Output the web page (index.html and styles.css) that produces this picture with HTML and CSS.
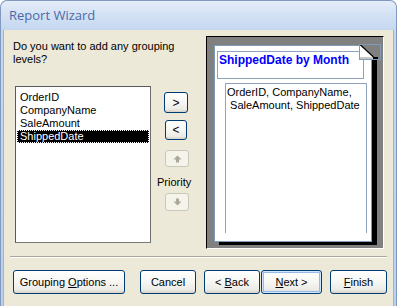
FILE: index.html
```html
<!DOCTYPE html>
<html>
<head>
<meta charset="utf-8">
<link rel="stylesheet" href="styles.css">
</head>
<body>
<div class="window">
  <div class="titlebar"><span class="title">Report Wizard</span></div>
  <div class="client">
    <div class="main">
      <div class="left">
        <p class="question">Do you want to add any grouping levels?</p>
        <div class="picker">
          <ul class="listbox">
            <li>OrderID</li>
            <li>CompanyName</li>
            <li>SaleAmount</li>
            <li class="selected"><span>ShippedDate</span></li>
          </ul>
          <div class="movebtns">
            <button class="btn move-add">&gt;</button>
            <button class="btn move-remove">&lt;</button>
            <button class="btn arrow up" disabled>
              <svg width="9" height="8" viewBox="0 0 9 8"><path d="M4.5 0.5 L8.5 4.5 L6 4.5 L6 7.5 L3 7.5 L3 4.5 L0.5 4.5 Z" fill="#aca899"/></svg>
            </button>
            <span class="priority">Priority</span>
            <button class="btn arrow down" disabled>
              <svg width="9" height="8" viewBox="0 0 9 8"><path d="M4.5 7.5 L8.5 3.5 L6 3.5 L6 0.5 L3 0.5 L3 3.5 L0.5 3.5 Z" fill="#aca899"/></svg>
            </button>
          </div>
        </div>
      </div>
      <div class="preview">
        <div class="page">
          <div class="group-head">ShippedDate by Month</div>
          <div class="detail">OrderID, CompanyName,<br>&nbsp;SaleAmount, ShippedDate</div>
          <svg class="dogear" width="22" height="16" viewBox="0 0 22 16">
            <rect x="0" y="0" width="22" height="16" fill="#808080"/>
            <polygon points="1,1 14,13 1,13" fill="#ffffff"/>
            <rect x="1" y="13" width="13" height="2" fill="#c8c8c8"/>
            <line x1="1" y1="0.5" x2="14.5" y2="13" stroke="#000" stroke-width="1.2"/>
            <rect x="14" y="13" width="5" height="3" fill="#000"/>
            <rect x="0.5" y="0.5" width="21" height="15" fill="none" stroke="#7f9db9"/>
          </svg>
        </div>
      </div>
    </div>
    <div class="separator"></div>
    <div class="footer">
      <button class="btn foot grouping"><span>Grouping <u>O</u>ptions ...</span></button>
      <button class="btn foot cancel"><span>Cancel</span></button>
      <button class="btn foot back"><span>&lt; <u>B</u>ack</span></button>
      <button class="btn foot next default"><span><u>N</u>ext &gt;</span></button>
      <button class="btn foot finish"><span><u>F</u>inish</span></button>
    </div>
  </div>
</div>
</body>
</html>
```
FILE: styles.css
```css
* { box-sizing: border-box; }
html, body {
  margin: 0;
  padding: 0;
  width: 397px;
  height: 306px;
  overflow: hidden;
  background: #ffffff;
}
body {
  font-family: "Liberation Sans", Arial, sans-serif;
  font-size: 11px;
  color: #000;
}
.window {
  width: 397px;
  height: 306px;
  border: 1px solid #8198c0;
  border-bottom: none;
  border-radius: 7px 7px 0 0;
  background: linear-gradient(to bottom, #e4edf9 0px, #d3e1f4 14px, #c5d7f0 29px, #bcd0ec 100%);
  display: flex;
  flex-direction: column;
  padding: 0 2px 0 2px;
  overflow: hidden;
}
.titlebar {
  height: 29px;
  flex: none;
  padding-left: 6px;
  line-height: 29px;
}
.title {
  font-family: "Open Sans", "Noto Sans", sans-serif;
  font-size: 13px;
  color: #4d6aa8;
}
.client {
  flex: 1;
  background: #ece9d8;
  border: 1px solid #9fb3d4;
  border-top: none;
  border-bottom: none;
  display: flex;
  flex-direction: column;
}
.main {
  display: flex;
  padding-left: 9px;
  height: 219px;
}
.left {
  width: 193px;
  flex: none;
}
.question {
  margin: 10px 0 0 0;
  width: 182px;
  line-height: 13px;
}
.picker {
  display: flex;
  margin: 20px 0 0 2px;
}
.listbox {
  list-style: none;
  margin: 0;
  padding: 4px 1px 0 1px;
  width: 136px;
  height: 157px;
  background: #fff;
  border: 1px solid #5a5a5a;
  border-right-color: #6e6e6e;
  border-bottom-color: #7a7a7a;
}
.listbox li {
  height: 13px;
  line-height: 13px;
  padding-left: 3px;
  white-space: nowrap;
}
.listbox li.selected {
  background: #000;
  color: #fff;
  outline: 1px dotted #fff;
  outline-offset: -1px;
}
.movebtns {
  display: flex;
  flex-direction: column;
  align-items: flex-start;
  padding-left: 5px;
}
.btn {
  font-family: "Liberation Sans", Arial, sans-serif;
  font-size: 11px;
  color: #000;
  border: 1px solid #003c74;
  border-radius: 3px;
  background: linear-gradient(to bottom, #ffffff 0%, #f7f7f4 45%, #ecebe6 85%, #d6d0c5 100%);
  padding: 0;
  margin: 0;
  display: block;
  text-align: center;
  white-space: nowrap;
}
.btn svg { display: block; margin: 0 auto; }
.move-add {
  width: 24px;
  height: 21px;
  margin: 6px 0 0 8px;
  font-size: 12px;
}
.move-remove {
  width: 22px;
  height: 20px;
  margin: 7px 0 0 9px;
  font-size: 12px;
}
.arrow {
  width: 24px;
  height: 17px;
  margin-left: 9px;
  border-color: #c9c7ba;
  background: #f5f4ea;
}
.arrow.up { margin-top: 10px; }
.arrow.down { margin-top: 4px; height: 18px; }
.priority {
  margin-top: 9px;
  margin-left: 1px;
  line-height: 13px;
}
.preview {
  margin-top: 6px;
  width: 178px;
  height: 213px;
  flex: none;
  background: #808080;
  border: 1px solid;
  border-color: #000 #fff #fff #000;
  padding: 8px 0 0 7px;
}
.page {
  position: relative;
  width: 158px;
  height: 197px;
  background: #fff;
  border: 1px solid #7f9db9;
  box-shadow: 5px 3px 0 #000;
}
.group-head {
  margin: 5px 0 0 2px;
  width: 147px;
  height: 28px;
  border: 1px solid #8fa3bf;
  padding: 1px 0 0 1px;
  color: #0000ff;
  font-weight: bold;
  font-size: 12px;
  line-height: 14px;
  white-space: nowrap;
}
.detail {
  margin: 4px 0 0 10px;
  width: 142px;
  height: 150px;
  border: 1px solid #8fa3bf;
  border-bottom: none;
  padding: 2px 0 0 1px;
  line-height: 13px;
  white-space: nowrap;
}
.dogear {
  position: absolute;
  left: 144px;
  top: -2px;
  display: block;
}
.separator {
  margin: 7px 6px 0 6px;
  border-top: 1px solid #aca899;
  border-bottom: 1px solid #fff;
}
.footer {
  display: flex;
  margin-top: 12px;
  padding-left: 9px;
}
.foot {
  height: 24px;
  line-height: 22px;
}
.grouping { width: 112px; }
.cancel { width: 56px; margin-left: 15px; }
.back { width: 56px; margin-left: 8px; }
.next { width: 61px; margin-left: 1px; }
.finish { width: 57px; margin-left: 8px; }
.default {
  box-shadow: inset 0 0 0 1px #cee7ff, inset 0 0 0 2px #98b8ea;
}
.foot u { text-decoration: underline; }
```
